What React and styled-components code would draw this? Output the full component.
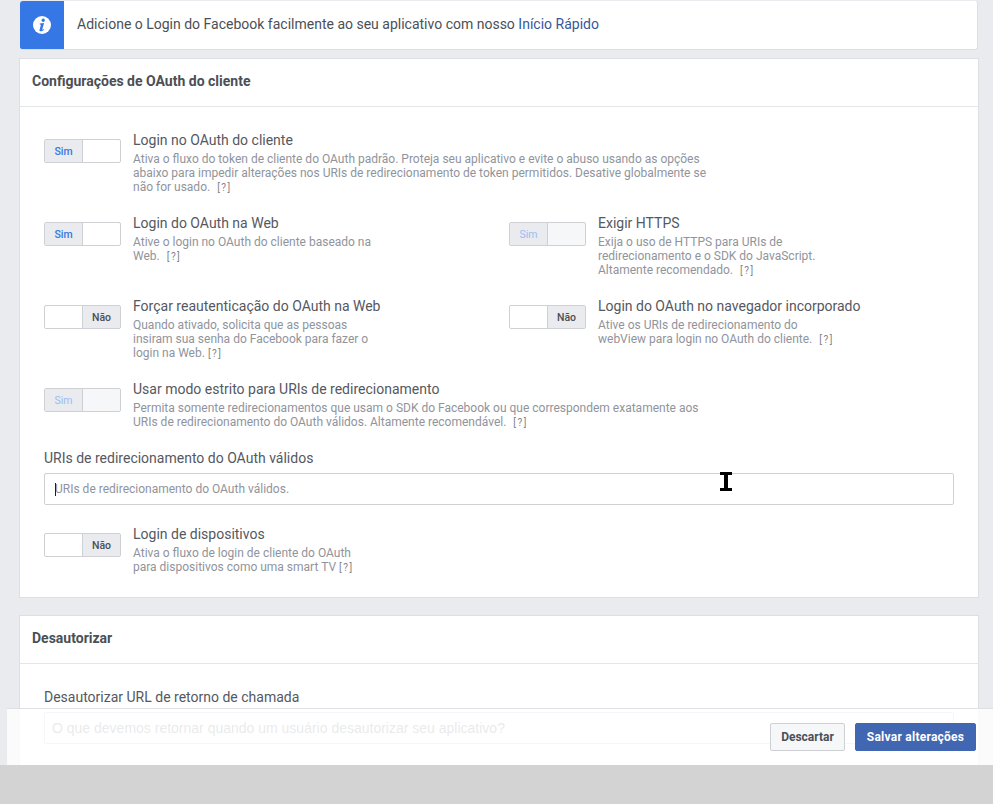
import React from "react";
import styled, { createGlobalStyle } from "styled-components";

const GlobalStyle = createGlobalStyle`
  html, body {
    margin: 0;
    padding: 0;
    height: 100%;
    overflow: hidden;
    background: #e9ebee;
    font-family: Roboto, "Liberation Sans", sans-serif;
  }
`;

const Page = styled.div`
  height: 804px;
  overflow: hidden;
  padding: 1px 14px 0 19px;
  box-sizing: border-box;
`;

const Banner = styled.div`
  display: flex;
  align-items: center;
  height: 49px;
  box-sizing: border-box;
  margin: 0 1px 8px;
  background: #fff;
  border: 1px solid #dddfe2;
  border-left: 0;
  border-top: 0;
  border-radius: 3px;
  overflow: hidden;
`;

const BannerIcon = styled.div`
  width: 44px;
  align-self: stretch;
  display: flex;
  align-items: center;
  justify-content: center;
  background: #3578e5;
`;

const InfoGlyph = styled.svg`
  margin-top: -1px;
`;

const BannerText = styled.div`
  margin: 0 0 2px 13px;
  font-size: 14px;
  color: #4b4f56;
`;

const BannerLink = styled.a`
  color: #365899;
`;

const Card = styled.section`
  background: #fff;
  border: 1px solid #dddfe2;
  margin-bottom: 17px;
`;

const CardHeader = styled.h2`
  margin: 0;
  height: 48px;
  padding: 0 0 4px 12px;
  display: flex;
  align-items: center;
  box-sizing: border-box;
  border-bottom: 1px solid #e5e6e9;
  font-size: 14px;
  font-weight: 700;
  color: #4b4f56;
`;

const CardBody = styled.div`
  padding: 24px 24px 23px;
`;

const OptionsGrid = styled.div`
  display: grid;
  grid-template-columns: 465px 1fr;
  row-gap: 20px;
`;

const Option = styled.div`
  display: flex;
  align-items: flex-start;
  grid-column: ${(p) => (p.$wide ? "1 / span 2" : "auto")};
`;

const Toggle = styled.div`
  display: flex;
  flex: none;
  width: 77px;
  height: 24px;
  margin: 8px 12px 0 0;
  box-sizing: border-box;
  border: 1px solid #ced0d4;
  border-radius: 2px;
  background: ${(p) => (p.$disabled ? "#f6f7f9" : "#fff")};
  overflow: hidden;
`;

const ToggleLabel = styled.span`
  width: 38px;
  box-sizing: border-box;
  display: flex;
  align-items: center;
  justify-content: center;
  margin-left: ${(p) => (p.$off ? "auto" : "0")};
  background: #e9ebee;
  border-style: solid;
  border-color: #ced0d4;
  border-width: ${(p) => (p.$off ? "0 0 0 1px" : "0 1px 0 0")};
  font-size: 10.5px;
  font-weight: ${(p) => (p.$disabled ? 400 : 500)};
  color: ${(p) => (p.$off ? "#4b4f56" : p.$disabled ? "#9cbcf2" : "#3578e5")};
`;

const OptionTitle = styled.div`
  font-size: 14px;
  line-height: 18px;
  color: #55585f;
  margin-bottom: 3px;
`;

const OptionText = styled.div`
  font-size: 12px;
  line-height: 14px;
  color: #90949c;
`;

const Help = styled.span`
  margin-left: ${(p) => (p.$tight ? 3 : 7)}px;
  font-size: 10px;
  line-height: 0;
  letter-spacing: 1.5px;
  color: #7f8389;
`;

const FieldLabel = styled.label`
  display: block;
  font-size: 14px;
  line-height: 18px;
  color: #55585f;
  margin: ${(p) => p.$top || 0}px 0 ${(p) => p.$gap}px;
`;

const FieldWrap = styled.div`
  position: relative;
  margin-bottom: 20px;
`;

const TextField = styled.input`
  display: block;
  width: 100%;
  height: 32px;
  box-sizing: border-box;
  padding: 0 ${(p) => (p.$arial ? 7 : 10)}px;
  border: 1px solid #ced0d4;
  border-radius: 2px;
  outline: none;
  font-family: ${(p) => (p.$arial ? '"Liberation Sans", Arial, sans-serif' : 'Roboto, sans-serif')};
  font-size: ${(p) => (p.$arial ? 14 : 12)}px;
  &::placeholder {
    color: #90949c;
    opacity: 1;
  }
`;

const Caret = styled.span`
  position: absolute;
  left: 11px;
  top: 10px;
  width: 1px;
  height: 13px;
  background: #1c1e21;
`;

const SaveBar = styled.div`
  position: fixed;
  left: 7px;
  right: 0;
  top: 708px;
  height: 57px;
  box-sizing: border-box;
  display: flex;
  align-items: center;
  justify-content: flex-end;
  gap: 10px;
  padding: 0 17px 0 0;
  border-top: 1px solid #dddfe2;
  background: rgba(255, 255, 255, 0.8);
`;

const BarButton = styled.button`
  height: 28px;
  box-sizing: border-box;
  padding: 0;
  width: ${(p) => (p.$primary ? 121 : 75)}px;
  border: 1px solid ${(p) => (p.$primary ? "#4267b2" : "#ced0d4")};
  border-radius: 2px;
  background: ${(p) => (p.$primary ? "#4267b2" : "#f6f7f9")};
  color: ${(p) => (p.$primary ? "#fff" : "#4b4f56")};
  font-family: Roboto, sans-serif;
  font-size: 12px;
  font-weight: 700;
  letter-spacing: ${(p) => (p.$primary ? "0.25px" : "0")};
`;

const BottomStrip = styled.div`
  position: fixed;
  left: 0;
  right: 0;
  top: 765px;
  bottom: 0;
  background: #d3d3d3;
`;

const TextCursor = styled.svg`
  position: fixed;
  left: 720px;
  top: 472px;
`;

const SwitchControl = ({ on, disabled }) => (
  <Toggle $disabled={disabled}>
    <ToggleLabel $off={!on} $disabled={disabled}>
      {on ? "Sim" : "Não"}
    </ToggleLabel>
  </Toggle>
);

const options = [
  {
    wide: true,
    on: true,
    title: "Login no OAuth do cliente",
    lines: [
      "Ativa o fluxo do token de cliente do OAuth padrão. Proteja seu aplicativo e evite o abuso usando as opções",
      "abaixo para impedir alterações nos URIs de redirecionamento de token permitidos. Desative globalmente se",
      "não for usado.",
    ],
  },
  {
    on: true,
    title: "Login do OAuth na Web",
    lines: ["Ative o login no OAuth do cliente baseado na", "Web."],
  },
  {
    on: true,
    disabled: true,
    title: "Exigir HTTPS",
    lines: [
      "Exija o uso de HTTPS para URIs de",
      "redirecionamento e o SDK do JavaScript.",
      "Altamente recomendado.",
    ],
  },
  {
    tight: true,
    title: "Forçar reautenticação do OAuth na Web",
    lines: [
      "Quando ativado, solicita que as pessoas",
      "insiram sua senha do Facebook para fazer o",
      "login na Web.",
    ],
  },
  {
    title: "Login do OAuth no navegador incorporado",
    lines: [
      "Ative os URIs de redirecionamento do",
      "webView para login no OAuth do cliente.",
    ],
  },
  {
    wide: true,
    on: true,
    disabled: true,
    title: "Usar modo estrito para URIs de redirecionamento",
    lines: [
      "Permita somente redirecionamentos que usam o SDK do Facebook ou que correspondem exatamente aos",
      "URIs de redirecionamento do OAuth válidos. Altamente recomendável.",
    ],
  },
];

const OptionRow = ({ wide, on, disabled, tight, title, lines }) => (
  <Option $wide={wide}>
    <SwitchControl on={on} disabled={disabled} />
    <div>
      <OptionTitle>{title}</OptionTitle>
      <OptionText>
        {lines.map((line, i) => (
          <React.Fragment key={line}>
            {line}
            {i < lines.length - 1 ? <br /> : <Help $tight={tight}>[?]</Help>}
          </React.Fragment>
        ))}
      </OptionText>
    </div>
  </Option>
);

const App = () => {
  return (
    <>
      <GlobalStyle />
      <Page>
        <Banner>
          <BannerIcon>
            <InfoGlyph width="18" height="18" viewBox="0 0 18 18">
              <circle cx="9" cy="9" r="9" fill="#fff" />
              <path
                d="M10.2 2.6a1.7 1.7 0 1 1 0 3.4 1.7 1.7 0 0 1 0-3.4zM6.7 7.6l4.4-.5-1.8 6.3c-.1.4.3.5.6.3l1-.8.4.5c-1 1.1-2.2 1.9-3.4 1.9-1.1 0-1.6-.7-1.3-1.6l1.2-4.4c.1-.5-.2-.8-1-.9z"
                fill="#3578e5"
              />
            </InfoGlyph>
          </BannerIcon>
          <BannerText>
            Adicione o Login do Facebook facilmente ao seu aplicativo com nosso{" "}
            <BannerLink>Início Rápido</BannerLink>
          </BannerText>
        </Banner>

        <Card>
          <CardHeader>Configurações de OAuth do cliente</CardHeader>
          <CardBody>
            <OptionsGrid>
              {options.map((o) => (
                <OptionRow key={o.title} {...o} />
              ))}
            </OptionsGrid>
            <FieldLabel $top={20} $gap={6}>
              URIs de redirecionamento do OAuth válidos
            </FieldLabel>
            <FieldWrap>
              <TextField placeholder="URIs de redirecionamento do OAuth válidos." />
              <Caret />
            </FieldWrap>
            <OptionRow
              tight
              title="Login de dispositivos"
              lines={[
                "Ativa o fluxo de login de cliente do OAuth",
                "para dispositivos como uma smart TV",
              ]}
            />
          </CardBody>
        </Card>

        <Card>
          <CardHeader>Desautorizar</CardHeader>
          <CardBody>
            <FieldLabel $gap={6}>Desautorizar URL de retorno de chamada</FieldLabel>
            <FieldWrap>
              <TextField
                $arial
                placeholder="O que devemos retornar quando um usuário desautorizar seu aplicativo?"
              />
            </FieldWrap>
          </CardBody>
        </Card>
      </Page>

      <SaveBar>
        <BarButton>Descartar</BarButton>
        <BarButton $primary>Salvar alterações</BarButton>
      </SaveBar>
      <BottomStrip />

      <TextCursor width="12" height="19" viewBox="0 0 12 19">
        <path d="M0 0h12v3H8v13h4v3H0v-3h4V3H0z" fill="#000" />
      </TextCursor>
    </>
  );
};

export default App;
